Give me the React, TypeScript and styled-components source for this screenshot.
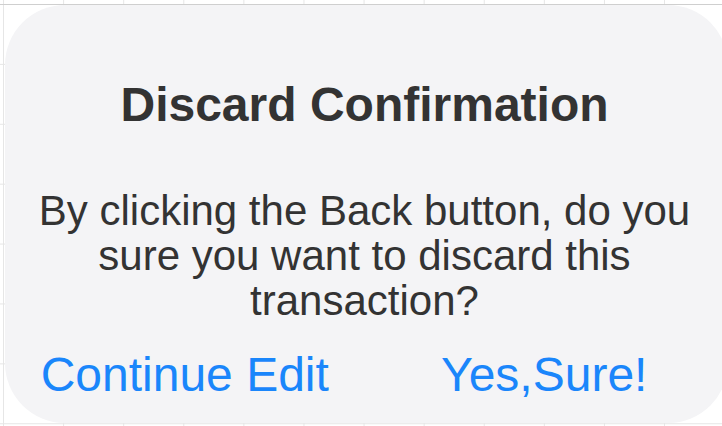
import styled, { createGlobalStyle } from "styled-components"

const GlobalStyle = createGlobalStyle`
  html, body {
    margin: 0;
    padding: 0;
    width: 722px;
    height: 426px;
    overflow: hidden;
    background: #ffffff;
  }
`

const App = () => {
  return (
    <>
      <GlobalStyle />
      <Page>
        <Dialog>
          <Title>Discard Confirmation</Title>
          <Message>
            By clicking the Back button, do you sure you want to discard this transaction?
          </Message>
          <Actions>
            <ActionButton>Continue Edit</ActionButton>
            <ActionButton>Yes,Sure!</ActionButton>
          </Actions>
        </Dialog>
      </Page>
    </>
  )
}

const Page = styled.div`
  width: 722px;
  height: 426px;
  box-sizing: border-box;
  padding: 5px 0 0 5px;
  overflow: hidden;
  background-color: #ffffff;
  background-image:
    linear-gradient(#cfcfcf, #cfcfcf),
    linear-gradient(to right, #e6e6e6 1px, transparent 1px),
    linear-gradient(to bottom, #e6e6e6 1px, transparent 1px);
  background-size: 100% 1px, 60.1px 100%, 100% 59.9px;
  background-position: 0 4px, 3px 0, 0 4px;
  background-repeat: no-repeat, repeat-x, repeat-y;
`

const Dialog = styled.div`
  width: 723px;
  flex-shrink: 0;
  height: 418px;
  box-sizing: border-box;
  padding: 72px 4px 0 0;
  border-radius: 60px;
  background: #f4f4f6;
  display: flex;
  flex-direction: column;
  align-items: center;
  font-family: "Liberation Sans", Arial, Helvetica, sans-serif;
`

const Title = styled.h1`
  margin: 0;
  font-size: 48px;
  line-height: 56px;
  font-weight: 700;
  color: #333333;
  text-align: center;
`

const Message = styled.p`
  margin: 55px 0 0;
  padding: 0 30px;
  font-size: 42px;
  line-height: 45px;
  color: #333333;
  text-align: center;
`

const Actions = styled.div`
  width: 100%;
  margin-top: 25px;
  display: flex;
`

const ActionButton = styled.button`
  flex: 1;
  padding: 0;
  border: none;
  background: none;
  font-family: inherit;
  font-size: 48px;
  line-height: 54px;
  color: #1a86fb;
  text-align: center;
  cursor: pointer;
`

export default App
